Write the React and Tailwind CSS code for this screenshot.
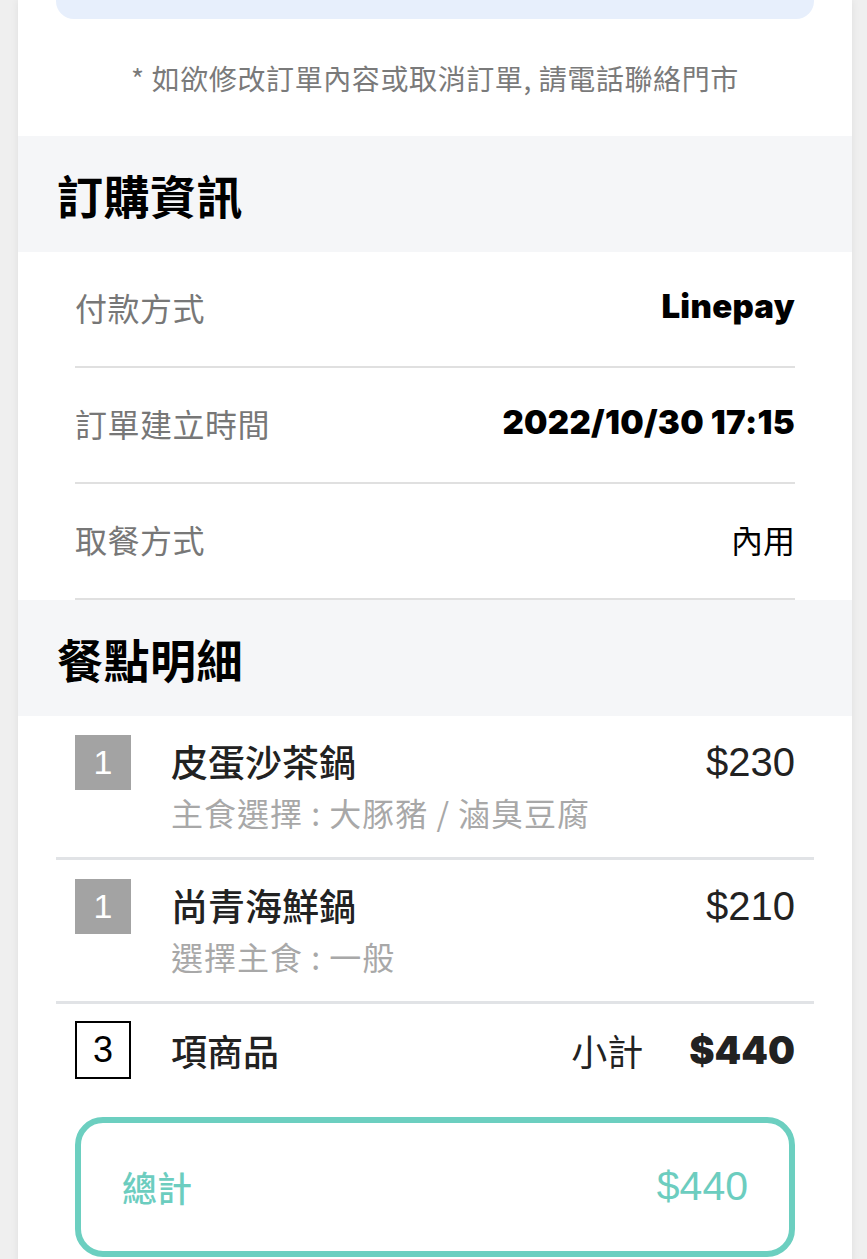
import React from 'react';

const cjk = { fontFamily: '"Noto Sans CJK TC", "Noto Sans", sans-serif' };
const latin = { fontFamily: '"Liberation Sans", "Noto Sans CJK TC", sans-serif' };
const heavy = { fontFamily: 'Inter, "Noto Sans CJK TC", sans-serif' };

const infoRows = [
  { label: '付款方式', value: 'Linepay', kind: 'heavy' },
  { label: '訂單建立時間', value: '2022/10/30 17:15', kind: 'heavy' },
  { label: '取餐方式', value: '內用', kind: 'plain' },
];

const items = [
  { qty: 1, name: '皮蛋沙茶鍋', option: '主食選擇 : 大豚豬 / 滷臭豆腐', price: '$230' },
  { qty: 1, name: '尚青海鮮鍋', option: '選擇主食 : 一般', price: '$210' },
];

const SectionTitle = ({ children }) => (
  <div className="h-[116px] bg-[#f5f6f8] px-[39px] flex items-center">
    <h2 className="text-[46px] font-bold text-black leading-none tracking-[0.5px]" style={cjk}>{children}</h2>
  </div>
);

export default function App() {
  return (
    <div className="min-h-screen bg-[#efefef] pl-[18px] pr-[15px]">
      <div className="bg-white min-h-screen shadow-[0_0_8px_rgba(0,0,0,0.07)] pb-10">
        <div className="px-[38px]">
          <div className="h-[19px] bg-[#e7effc] rounded-b-[18px]" />
        </div>

        <div className="h-[117px] flex items-center justify-center">
          <p className="text-[28px] text-[#7a7a7a] leading-none tracking-[0.6px]" style={cjk}>
            * 如欲修改訂單內容或取消訂單, 請電話聯絡門市
          </p>
        </div>

        <SectionTitle>訂購資訊</SectionTitle>

        <div className="px-[57px]">
          {infoRows.map((row) => (
            <div
              key={row.label}
              className="h-[116px] flex items-center justify-between border-b-2 border-[#e0e0e0]"
            >
              <span className="text-[32px] text-[#777777] tracking-[0.5px] -mt-[4px]" style={cjk}>{row.label}</span>
              {row.kind === 'heavy' ? (
                <span className="text-[33px] font-black text-black tracking-[0.3px] -mt-[4px]" style={heavy}>{row.value}</span>
              ) : (
                <span className="text-[32px] text-black -mt-[4px]" style={cjk}>{row.value}</span>
              )}
            </div>
          ))}
        </div>

        <SectionTitle>餐點明細</SectionTitle>

        <div className="px-[38px]">
          {items.map((item) => (
            <div key={item.name} className="border-b-[3px] border-[#e1e3e6] px-[19px] pt-[19px] pb-[25px] flex items-start">
              <div className="w-[56px] h-[55px] bg-[#a3a3a3] text-white flex items-center justify-center text-[34px] shrink-0" style={latin}>
                {item.qty}
              </div>
              <div className="ml-[40px] flex-1 flex flex-col">
                <div className="flex items-center justify-between h-[60px] -mt-[3px]">
                  <span className="text-[37px] font-medium text-[#222222]" style={cjk}>{item.name}</span>
                  <span className="text-[40px] text-[#222222]" style={latin}>{item.price}</span>
                </div>
                <span className="text-[32px] text-[#a8a8a8] leading-[40px] tracking-[1px]" style={cjk}>{item.option}</span>
              </div>
            </div>
          ))}

          <div className="px-[19px] pt-[17px] flex items-center">
            <div className="w-[56px] h-[58px] border-2 border-black flex items-center justify-center text-[36px] text-black shrink-0" style={latin}>
              3
            </div>
            <span className="ml-[40px] text-[36px] font-medium text-[#222222]" style={cjk}>項商品</span>
            <span className="ml-auto text-[36px] text-[#222222]" style={cjk}>小計</span>
            <span className="ml-[46px] text-[38px] font-black text-[#222222]" style={heavy}>$440</span>
          </div>

          <div className="px-[19px] pt-[38px]">
            <div className="h-[140px] border-[6px] border-[#6ccfc0] rounded-[28px] flex items-center justify-between pl-[41px] pr-[41px]">
              <span className="text-[35px] font-medium text-[#6ccdbf]" style={cjk}>總計</span>
              <span className="text-[41px] text-[#6ccdbf]" style={latin}>$440</span>
            </div>
          </div>
        </div>
      </div>
    </div>
  );
}
